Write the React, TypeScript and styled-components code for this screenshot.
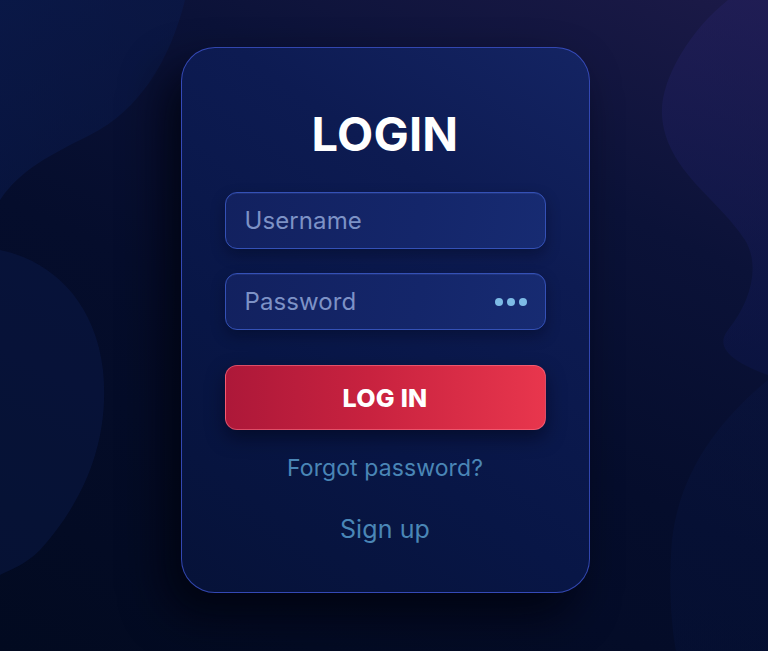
import React from 'react';
import styled, { createGlobalStyle } from 'styled-components';

const GlobalStyle = createGlobalStyle`
	html, body {
		margin: 0;
		padding: 0;
		background: #040c26;
	}
	* {
		box-sizing: border-box;
	}
`;

const Page = styled.main`
	position: relative;
	width: 768px;
	height: 651px;
	overflow: hidden;
	display: flex;
	justify-content: center;
	padding: 47px 0 0 2px;
	font-family: Inter, 'Noto Sans', sans-serif;
	background: linear-gradient(
		205deg,
		#1c1a48 0%,
		#0b1238 28%,
		#050d2c 55%,
		#020a20 100%
	);
`;

const Backdrop = styled.svg`
	position: absolute;
	inset: 0;
	width: 100%;
	height: 100%;
	pointer-events: none;
`;

const Card = styled.section`
	position: relative;
	width: 409px;
	height: 546px;
	border-radius: 34px;
	border: 1px solid rgba(66, 88, 214, 0.75);
	background: linear-gradient(
		215deg,
		#142463 0%,
		#0d1b52 30%,
		#081646 65%,
		#061238 100%
	);
	box-shadow: -16px 22px 44px rgba(0, 3, 12, 0.8);
	display: flex;
	flex-direction: column;
	align-items: center;
	padding-top: 58px;
`;

const Title = styled.h1`
	margin: 0;
	font-size: 47px;
	line-height: 56px;
	font-weight: 700;
	color: #ffffff;
	letter-spacing: 0.2px;
`;

const Form = styled.div`
	display: flex;
	flex-direction: column;
	width: 321px;
	margin-top: 30px;
	gap: 24px;
`;

const Field = styled.div`
	height: 57px;
	border-radius: 12px;
	border: 1px solid #3451b6;
	background: linear-gradient(100deg, #12215f 0%, #14266a 60%, #172b72 100%);
	box-shadow: inset 0 1px 0 rgba(120, 150, 255, 0.12), 0 6px 14px rgba(0, 6, 24, 0.35);
	display: flex;
	align-items: center;
	justify-content: space-between;
	padding: 0 17px 0 19px;
`;

const Placeholder = styled.span`
	font-size: 24px;
	color: #7d92c6;
	letter-spacing: 0.1px;
`;

const Dots = styled.svg`
	width: 34px;
	height: 10px;
`;

const LoginButton = styled.button`
	margin-top: 11px;
	height: 65px;
	border-radius: 12px;
	border: 1px solid rgba(255, 120, 140, 0.55);
	background: linear-gradient(90deg, #ad1839 0%, #c8223f 45%, #e8364d 100%);
	box-shadow: 0 8px 18px rgba(0, 4, 20, 0.5);
	color: #ffffff;
	font-family: Inter, 'Noto Sans', sans-serif;
	font-size: 25px;
	font-weight: 800;
	letter-spacing: 0.3px;
	cursor: pointer;
`;

const TextLink = styled.a<{ $size: number; $top: number }>`
	margin-top: ${({ $top }) => $top}px;
	font-size: ${({ $size }) => $size}px;
	color: #4a86b6;
	text-decoration: none;
	letter-spacing: 0.1px;
`;

export default function App() {
	return (
		<>
			<GlobalStyle />
			<Page>
				<Backdrop viewBox='0 0 768 651' preserveAspectRatio='none'>
					<defs>
						<linearGradient id='tl' x1='0' y1='0' x2='1' y2='1'>
							<stop offset='0' stopColor='#0a1a4c' stopOpacity='0.75' />
							<stop offset='1' stopColor='#0a1a4c' stopOpacity='0.35' />
						</linearGradient>
						<linearGradient id='rw' x1='0' y1='0' x2='0' y2='1'>
							<stop offset='0' stopColor='#221f5c' stopOpacity='0.6' />
							<stop offset='1' stopColor='#0f1a5a' stopOpacity='0.3' />
						</linearGradient>
						<linearGradient id='br' x1='0' y1='0' x2='0' y2='1'>
							<stop offset='0' stopColor='#0b1a4e' stopOpacity='0.25' />
							<stop offset='1' stopColor='#061440' stopOpacity='0.35' />
						</linearGradient>
					</defs>
					<path
						d='M0 0 H185 C170 60 140 110 90 135 C50 155 20 170 0 200 Z'
						fill='url(#tl)'
					/>
					<path
						d='M0 250 C50 260 95 300 103 370 C110 440 85 500 40 550 C25 565 10 570 0 575 Z'
						fill='#0a1a4c'
						opacity='0.45'
					/>
					<path
						d='M768 0 H728 C690 30 660 80 662 115 C665 170 720 200 745 240 C760 265 752 300 728 330 C712 350 740 365 768 375 Z'
						fill='url(#rw)'
					/>
					<path
						d='M768 380 C720 420 680 470 672 540 C668 590 672 630 676 651 H768 Z'
						fill='url(#br)'
					/>
				</Backdrop>
				<Card>
					<Title>LOGIN</Title>
					<Form>
						<Field>
							<Placeholder>Username</Placeholder>
						</Field>
						<Field>
							<Placeholder>Password</Placeholder>
							<Dots viewBox='0 0 34 10'>
								<circle cx='5' cy='5' r='4' fill='#7dbbe6' />
								<circle cx='17' cy='5' r='4' fill='#7dbbe6' />
								<circle cx='29' cy='5' r='4' fill='#7dbbe6' />
							</Dots>
						</Field>
						<LoginButton type='button'>LOG IN</LoginButton>
					</Form>
					<TextLink href='#' $size={23} $top={24}>
						Forgot password?
					</TextLink>
					<TextLink href='#' $size={25} $top={32}>
						Sign up
					</TextLink>
				</Card>
			</Page>
		</>
	);
}
